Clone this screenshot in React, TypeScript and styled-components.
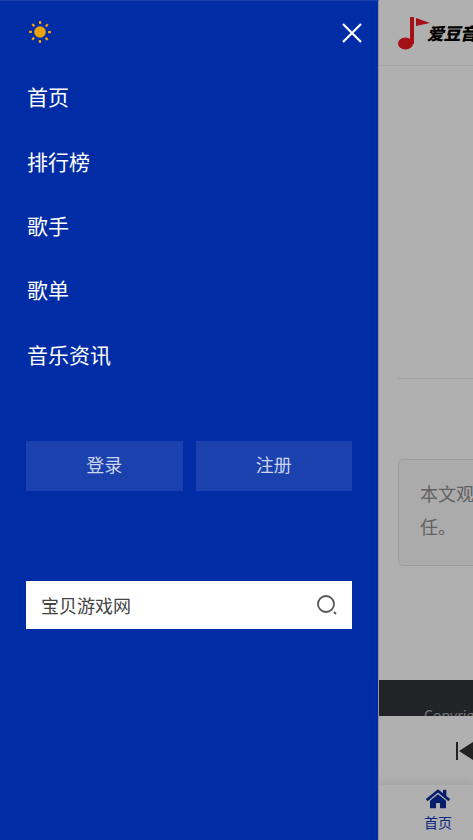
import React from "react";
import styled, { createGlobalStyle } from "styled-components";
import { FaHome } from "react-icons/fa";

const CJK = `"Noto Sans CJK SC", "Noto Sans", sans-serif`;

const menuItems = ["首页", "排行榜", "歌手", "歌单", "音乐资讯"];

function Sun() {
  const rays = [0, 45, 90, 135, 180, 225, 270, 315];
  return (
    <SunIcon width="24" height="24" viewBox="0 0 24 24">
      <circle cx="12" cy="12" r="5.8" fill="#eba40f" />
      {rays.map((deg) => (
        <rect
          key={deg}
          x="11"
          y="1"
          width="2.2"
          height="3"
          fill="#eba40f"
          transform={`rotate(${deg} 12 12)`}
        />
      ))}
    </SunIcon>
  );
}

function Close() {
  return (
    <svg width="22" height="22" viewBox="0 0 22 22">
      <path d="M2 2 L20 20 M20 2 L2 20" stroke="#fff" strokeWidth="2.2" fill="none" />
    </svg>
  );
}

function Magnifier() {
  return (
    <svg width="22" height="22" viewBox="0 0 22 22">
      <circle cx="10" cy="10" r="8" stroke="#555" strokeWidth="1.8" fill="none" />
      <path d="M18 18 L20 20" stroke="#555" strokeWidth="1.8" fill="none" />
    </svg>
  );
}

function Note() {
  return (
    <svg width="32" height="33" viewBox="0 0 32 33">
      <ellipse cx="7.5" cy="26.5" rx="7.5" ry="6" fill="#ec1a21" />
      <rect x="12" y="0" width="4" height="27" fill="#ec1a21" />
      <path d="M18 1 L32 6 L18 9 Z" fill="#ec1a21" />
    </svg>
  );
}

function App() {
  return (
    <>
      <GlobalStyle />
      <Shell>
        <Drawer>
          <DrawerTop>
            <Sun />
            <Close />
          </DrawerTop>
          <Menu>
            {menuItems.map((item) => (
              <MenuItem key={item}>{item}</MenuItem>
            ))}
          </Menu>
          <AuthRow>
            <AuthButton>登录</AuthButton>
            <AuthButton>注册</AuthButton>
          </AuthRow>
          <SearchBox>
            <span>宝贝游戏网</span>
            <Magnifier />
          </SearchBox>
        </Drawer>
        <Page>
          <PageHeader>
            <Note />
            <LogoText>爱豆音乐网</LogoText>
          </PageHeader>
          <PageBody>
            <Rule />
            <Notice>本文观点不代表本站立场，本站不承担任何法律责任。</Notice>
          </PageBody>
          <PageFooter>Copyright</PageFooter>
          <Player>
            <PrevBar />
            <PrevArrow />
          </Player>
          <TabBar>
            <Tab>
              <FaHome size={24} />
              <TabLabel>首页</TabLabel>
            </Tab>
          </TabBar>
          <Scrim />
        </Page>
      </Shell>
    </>
  );
}

const GlobalStyle = createGlobalStyle`
  html, body {
    margin: 0;
    padding: 0;
    height: 100%;
    background: #fff;
    font-family: ${CJK};
  }
  * {
    box-sizing: border-box;
  }
`;

const Shell = styled.div`
  display: flex;
  width: 473px;
  height: 840px;
  overflow: hidden;
`;

const Drawer = styled.aside`
  flex: 0 0 379px;
  height: 100%;
  background: #002ca6;
  border-top: 1px solid #1a41ae;
  border-right: 1px solid #8f94a8;
`;

const DrawerTop = styled.div`
  display: flex;
  align-items: center;
  justify-content: space-between;
  height: 65px;
  padding: 0 15px 1px 28px;
  border-bottom: 1px solid #002aa0;
`;

const SunIcon = styled.svg`
  margin-bottom: 2px;
`;

const Menu = styled.ul`
  list-style: none;
  margin: 0;
  padding: 0;
`;

const MenuItem = styled.li`
  display: flex;
  align-items: center;
  height: 64.4px;
  padding: 0 0 3px 27px;
  color: #fff;
  font-size: 21px;
  border-bottom: 1px solid #002aa0;
`;

const AuthRow = styled.div`
  display: flex;
  gap: 13px;
  margin: 53px 26px 0;
`;

const AuthButton = styled.div`
  flex: 1;
  height: 50px;
  display: flex;
  align-items: center;
  justify-content: center;
  padding-bottom: 3px;
  background: #1a41ae;
  color: #ccd5ed;
  font-size: 18px;
`;

const SearchBox = styled.div`
  display: flex;
  align-items: center;
  justify-content: space-between;
  height: 48px;
  margin: 90px 26px 0;
  padding: 0 14px 0 15px;
  background: #fff;
  color: #444;
  font-size: 18px;
`;

const Page = styled.div`
  position: relative;
  flex: 1;
  min-width: 0;
  height: 100%;
  display: flex;
  flex-direction: column;
  overflow: hidden;
`;

const Scrim = styled.div`
  position: absolute;
  inset: 0;
  background: rgba(0, 0, 0, 0.31);
`;

const PageHeader = styled.header`
  flex: 0 0 66px;
  display: flex;
  align-items: center;
  padding: 0 0 0 19px;
  border-bottom: 1px solid #f0f0f0;
  white-space: nowrap;
  overflow: hidden;
  svg {
    flex-shrink: 0;
    margin-top: 1px;
  }
`;

const LogoText = styled.span`
  margin-left: -3px;
  color: #000;
  font-size: 17px;
  font-weight: 900;
  font-style: italic;
  letter-spacing: -0.5px;
`;

const PageBody = styled.main`
  flex: 1;
  padding: 312px 0 0 19px;
  width: 460px;
  overflow: hidden;
`;

const Rule = styled.div`
  height: 1px;
  background: #e8e8e8;
`;

const Notice = styled.div`
  margin-top: 80px;
  width: 440px;
  height: 107px;
  padding: 17px 21px;
  border: 1px solid #e2e2e2;
  border-radius: 5px;
  background: #f8f8f8;
  color: #8f8f8f;
  font-size: 18px;
  line-height: 33px;
`;

const PageFooter = styled.footer`
  flex: 0 0 36px;
  padding: 26px 0 0 45px;
  background: #303438;
  color: #aaa;
  font-size: 14px;
  line-height: 18px;
  overflow: hidden;
  white-space: nowrap;
`;

const Player = styled.div`
  flex: 0 0 69px;
  display: flex;
  align-items: center;
  padding: 0 0 0 77px;
  background: #fff;
`;

const PrevBar = styled.span`
  width: 3px;
  height: 18px;
  background: #333;
`;

const PrevArrow = styled.span`
  width: 0;
  height: 0;
  border-top: 9px solid transparent;
  border-bottom: 9px solid transparent;
  border-right: 14px solid #333;
  margin-left: 1px;
`;

const TabBar = styled.nav`
  flex: 0 0 55px;
  padding-left: 39px;
  background: #fff;
  box-shadow: 0 -3px 8px rgba(0, 0, 0, 0.08);
`;

const Tab = styled.div`
  width: 40px;
  display: flex;
  flex-direction: column;
  align-items: center;
  padding-top: 2px;
  color: #0a2a9e;
`;

const TabLabel = styled.span`
  margin-top: 1px;
  color: #1238c0;
  font-size: 14px;
  line-height: 20px;
`;

export default App;
